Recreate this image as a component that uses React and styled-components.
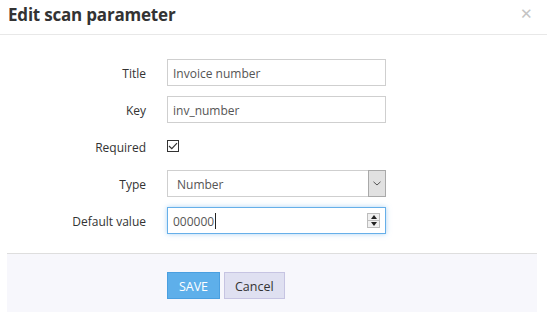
import React from "react";
import styled, { createGlobalStyle } from "styled-components";

const Global = createGlobalStyle`
  html, body { margin: 0; padding: 0; background: #fff; }
  body { font-family: "Open Sans", "Noto Sans", sans-serif; color: #333; }
  * { box-sizing: border-box; }
`;

const Dialog = styled.div`
  width: 547px;
  height: 312px;
  overflow: hidden;
  background: #fff;
  display: flex;
  flex-direction: column;
`;

const Header = styled.div`
  height: 35px;
  border-bottom: 1px solid #e8e8e8;
  display: flex;
  align-items: center;
  justify-content: space-between;
  padding: 0 14px 0 8px;
`;

const Title = styled.h4`
  margin: 0;
  font-size: 17px;
  font-weight: 700;
  color: #333;
  letter-spacing: -0.2px;
  line-height: 1;
  margin-top: -5px;
`;

const Close = styled.span`
  color: #c4c4c4;
  font-size: 15px;
  line-height: 1;
  margin-top: -8px;
`;

const Body = styled.div`
  padding: 24px 0 19px 7px;
  display: flex;
  flex-direction: column;
  gap: 10px;
`;

const Row = styled.div`
  display: grid;
  grid-template-columns: 139px 219px;
  column-gap: 21px;
  align-items: center;
  height: 27px;
`;

const Label = styled.label`
  text-align: right;
  font-size: 12px;
  color: #333;
  padding-top: 2px;
`;

const Field = styled.div`
  height: 27px;
  border: 1px solid ${(p) => (p.$focus ? "#66afe9" : "#cfcfcf")};
  box-shadow: ${(p) => (p.$focus ? "0 0 5px rgba(102,175,233,0.55)" : "none")};
  background: #fff;
  display: flex;
  align-items: center;
  padding-left: ${(p) => p.$pad || 5}px;
  padding-top: 2px;
  font-size: 12px;
  color: #555;
  position: relative;
`;

const Caret = styled.span`
  display: inline-block;
  width: 1px;
  height: 16px;
  background: #222;
  margin-left: 1px;
  margin-top: -2px;
`;

const Check = styled.div`
  width: 12px;
  height: 12px;
  border: 1px solid #333;
  background: #fff;
  display: flex;
  align-items: center;
  justify-content: center;
  margin-top: -2px;
`;

const SelectArrow = styled.div`
  position: absolute;
  right: -1px;
  top: -1px;
  width: 18px;
  height: 27px;
  background: #e1e1e1;
  border: 1px solid #a9a9a9;
  display: flex;
  align-items: center;
  justify-content: center;
`;

const Spinner = styled.div`
  position: absolute;
  right: 5px;
  top: 5px;
  width: 13px;
  height: 15px;
  display: flex;
  flex-direction: column;
  border: 1px solid #bdbdbd;
  background: #f0f0f0;
`;

const SpinHalf = styled.div`
  flex: 1;
  display: flex;
  align-items: center;
  justify-content: center;
  & + & { border-top: 1px solid #bdbdbd; }
`;

const Footer = styled.div`
  margin: 0 10px 0 7px;
  flex: 1;
  background: #f7f7fc;
  border-top: 1px solid #dedede;
  padding: 18px 0 0 160px;
  display: flex;
  gap: 4px;
  align-items: flex-start;
`;

const Button = styled.button`
  height: 27px;
  padding: 2px 10px 0;
  min-width: ${(p) => (p.$primary ? 53 : 60)}px;
  font-family: inherit;
  font-size: 12.5px;
  border: 1px solid ${(p) => (p.$primary ? "#4a9fe0" : "#c6c4e2")};
  background: ${(p) => (p.$primary ? "#5eafea" : "#dfe0f1")};
  color: ${(p) => (p.$primary ? "#fff" : "#333")};
  cursor: pointer;
`;

export default function App() {
  return (
    <>
      <Global />
      <Dialog>
        <Header>
          <Title>Edit scan parameter</Title>
          <Close>✕</Close>
        </Header>
        <Body>
          <Row>
            <Label>Title</Label>
            <Field>Invoice number</Field>
          </Row>
          <Row>
            <Label>Key</Label>
            <Field>inv_number</Field>
          </Row>
          <Row>
            <Label>Required</Label>
            <Check>
              <svg width="10" height="8" viewBox="0 0 10 8">
                <path d="M1 4 L3.8 6.6 L9 1.2" fill="none" stroke="#333" strokeWidth="1.2" />
              </svg>
            </Check>
          </Row>
          <Row>
            <Label>Type</Label>
            <Field $pad={9}>
              Number
              <SelectArrow>
                <svg width="8" height="5" viewBox="0 0 8 5">
                  <path d="M0.5 0.8 L4 4 L7.5 0.8" fill="none" stroke="#555" strokeWidth="1" />
                </svg>
              </SelectArrow>
            </Field>
          </Row>
          <Row>
            <Label>Default value</Label>
            <Field $focus>
              000000<Caret />
              <Spinner>
                <SpinHalf>
                  <svg width="6" height="4" viewBox="0 0 6 4"><path d="M0 4 L3 0 L6 4 Z" fill="#222" /></svg>
                </SpinHalf>
                <SpinHalf>
                  <svg width="6" height="4" viewBox="0 0 6 4"><path d="M0 0 L3 4 L6 0 Z" fill="#222" /></svg>
                </SpinHalf>
              </Spinner>
            </Field>
          </Row>
        </Body>
        <Footer>
          <Button $primary>SAVE</Button>
          <Button>Cancel</Button>
        </Footer>
      </Dialog>
    </>
  );
}
